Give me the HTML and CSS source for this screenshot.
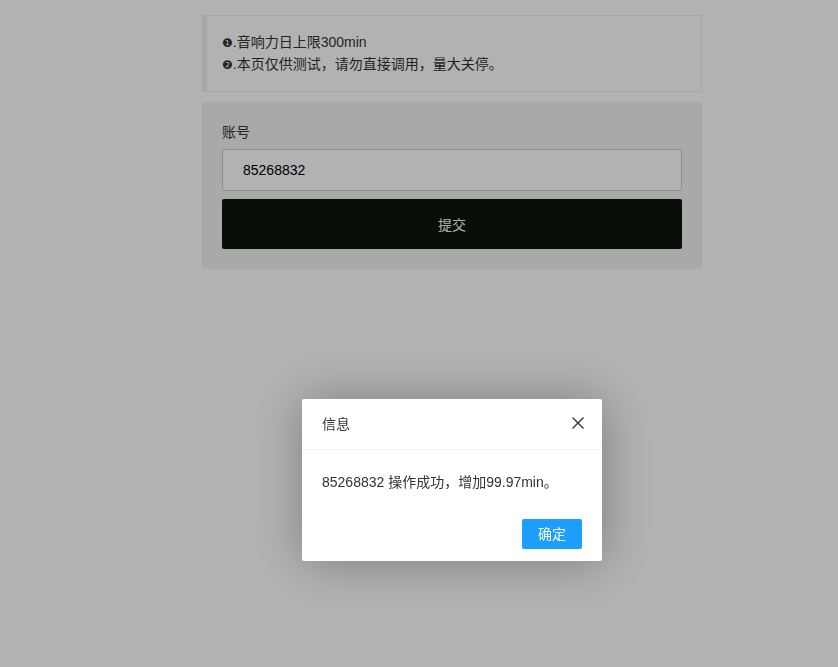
FILE: index.html
```html
<!DOCTYPE html>
<html lang="zh-CN">

<head>
    <meta charset="UTF-8">
    <meta name="viewport" content="width=device-width, initial-scale=1.0">
    <title>音响力</title>
    <link rel="stylesheet" href="styles.css">
</head>

<body>
    <div class="container">
        <blockquote class="quote">
            <p><span class="num">&#10102;</span>.音响力日上限300min</p>
            <p><span class="num">&#10103;</span>.本页仅供测试，请勿直接调用，量大关停。</p>
        </blockquote>
        <form class="card" id="form">
            <label for="account">账号</label>
            <input type="text" id="account" class="input" value="85268832">
            <button type="submit" class="submit">提交</button>
        </form>
    </div>

    <div class="shade"></div>

    <div class="layer">
        <div class="layer-title">
            信息
            <span class="layer-close">
                <svg width="14" height="14" viewBox="0 0 14 14">
                    <path d="M1.5 1.5 L12.5 12.5 M12.5 1.5 L1.5 12.5" stroke="#333" stroke-width="1.4" fill="none" />
                </svg>
            </span>
        </div>
        <div class="layer-content">85268832 操作成功，增加99.97min。</div>
        <div class="layer-btn">
            <a class="btn">确定</a>
        </div>
    </div>
</body>

</html>
```

FILE: styles.css
```css
body {
    margin: 0;
    background-color: #fff;
    font-family: "Liberation Sans", "Noto Sans CJK SC", sans-serif;
    font-size: 14px;
    color: #333;
}

.container {
    width: 500px;
    margin: 15px 0 0 202px;
}

.quote {
    margin: 0 0 10px;
    padding: 15px 15px 16px;
    border: 1px solid #eee;
    border-left: 5px solid #eee;
    background-color: #fff;
}

.quote p {
    margin: 0;
    height: 22px;
    line-height: 22px;
    overflow: hidden;
}

.num {
    font-family: "DejaVu Sans", sans-serif;
    font-size: 12px;
    line-height: 1;
}

.card {
    display: flex;
    flex-direction: column;
    padding: 20px;
    background-color: #f2f2f2;
    border-radius: 4px;
}

label {
    line-height: 20px;
    margin-bottom: 7px;
}

.input {
    height: 42px;
    box-sizing: border-box;
    padding: 0 20px;
    border: 1px solid #ccc;
    border-radius: 3px;
    background: #fff;
    font-family: inherit;
    font-size: 14px;
    color: #000;
    margin-bottom: 8px;
}

.submit {
    height: 50px;
    border: none;
    border-radius: 2px;
    background-color: #0b160a;
    color: #fff;
    font-family: inherit;
    font-size: 14px;
    cursor: pointer;
}

.shade {
    position: fixed;
    inset: 0;
    background-color: rgba(0, 0, 0, 0.3);
}

.layer {
    position: fixed;
    left: 302px;
    top: 399px;
    width: 300px;
    background-color: #fff;
    border-radius: 2px;
    box-shadow: 1px 1px 50px rgba(0, 0, 0, 0.3);
}

.layer-title {
    position: relative;
    height: 50px;
    line-height: 50px;
    padding: 0 20px;
    border-bottom: 1px solid #f0f0f0;
    color: #333;
}

.layer-close {
    position: absolute;
    right: 17px;
    top: 17px;
    width: 14px;
    height: 14px;
    line-height: 0;
}

.layer-content {
    padding: 20px;
    line-height: 24px;
    color: #333;
}

.layer-btn {
    display: flex;
    justify-content: flex-end;
    padding: 0 20px 12px;
}

.btn {
    margin-top: 5px;
    width: 60px;
    height: 30px;
    line-height: 30px;
    text-align: center;
    background-color: #1e9fff;
    color: #fff;
    border-radius: 2px;
}
```
